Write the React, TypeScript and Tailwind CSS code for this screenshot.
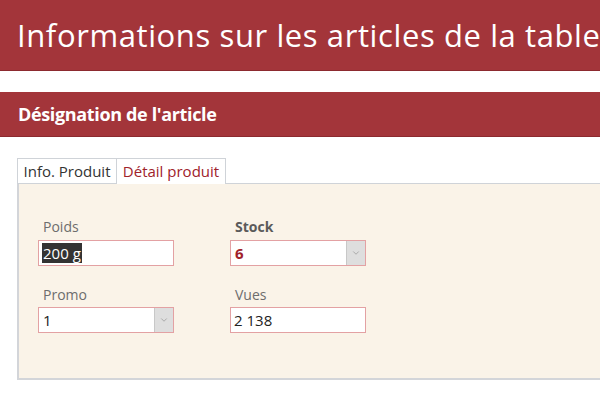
import { ChevronDown } from 'lucide-react'

const font = "font-['Open_Sans',sans-serif]"

function Label({ text, bold }: { text: string; bold?: boolean }) {
  return (
    <div className={`h-[18px] text-[14px] leading-[18px] pl-[5px] ${bold ? 'font-bold text-[#5a5a5a]' : 'text-[#6d6d6d]'}`}>
      {text}
    </div>
  )
}

function TextBox({ value, selected }: { value: string; selected?: boolean }) {
  return (
    <div className="flex h-[26px] w-[136px] items-center border border-[#e3a1a3] bg-white px-[3px] text-[15px] text-[#222]">
      {selected ? <span className="bg-[#333] px-[1px] leading-[20px] text-white">{value}</span> : <span>{value}</span>}
    </div>
  )
}

function Combo({ value, accent }: { value: string; accent?: boolean }) {
  return (
    <div className="flex h-[26px] w-[136px] items-stretch border border-[#e3a1a3] bg-white">
      <div className={`flex flex-1 items-center px-[4px] text-[15px] ${accent ? 'font-bold text-[#a0222b]' : 'text-[#222]'}`}>{value}</div>
      <div className="flex w-[19px] items-center justify-center border-l border-[#c8c8c8] bg-[#dedede]">
        <ChevronDown size={10} strokeWidth={1.5} className="text-[#8a8a8a]" />
      </div>
    </div>
  )
}

export default function App() {
  return (
    <div className={`h-[397px] w-[600px] overflow-hidden bg-white ${font}`}>
      <div className="flex h-[71px] items-center overflow-hidden whitespace-nowrap border-b border-[#8c2a2f] bg-[#a3353a] pl-[17px] text-[31px] tracking-[0.6px] text-white">
        Informations sur les articles de la table
      </div>
      <div className="mt-[21px] flex h-[45px] items-center border-b border-[#8c2a2f] bg-[#a3353a] pl-[18px] text-[18px] font-bold tracking-[-0.35px] text-white">
        Désignation de l&apos;article
      </div>

      <div className="ml-[17px] mt-[21px]">
        <div className="flex h-[26px] items-stretch">
          <div className="flex w-[100px] items-center justify-center border border-[#cfd3d8] bg-white text-[15px] text-[#333]">
            Info. Produit
          </div>
          <div className="flex w-[109px] items-center justify-center border-r border-t border-[#cfd3d8] bg-white text-[15px] text-[#a0222b]">
            Détail produit
          </div>
          <div className="flex-1 border-b border-[#cfd3d8]" />
        </div>
        <div className="h-[196px] border-b-2 border-l-2 border-[#d3d5d9] bg-[#faf3e8] pl-[19px] pt-[34px]">
          <div className="grid grid-cols-[136px_136px] gap-x-[56px] gap-y-[20px]">
            <div className="flex flex-col gap-[4px]">
              <Label text="Poids" />
              <TextBox value="200 g" selected />
            </div>
            <div className="flex flex-col gap-[4px]">
              <Label text="Stock" bold />
              <Combo value="6" accent />
            </div>
            <div className="flex flex-col gap-[3px]">
              <Label text="Promo" />
              <Combo value="1" />
            </div>
            <div className="flex flex-col gap-[3px]">
              <Label text="Vues" />
              <TextBox value="2 138" />
            </div>
          </div>
        </div>
      </div>
    </div>
  )
}
